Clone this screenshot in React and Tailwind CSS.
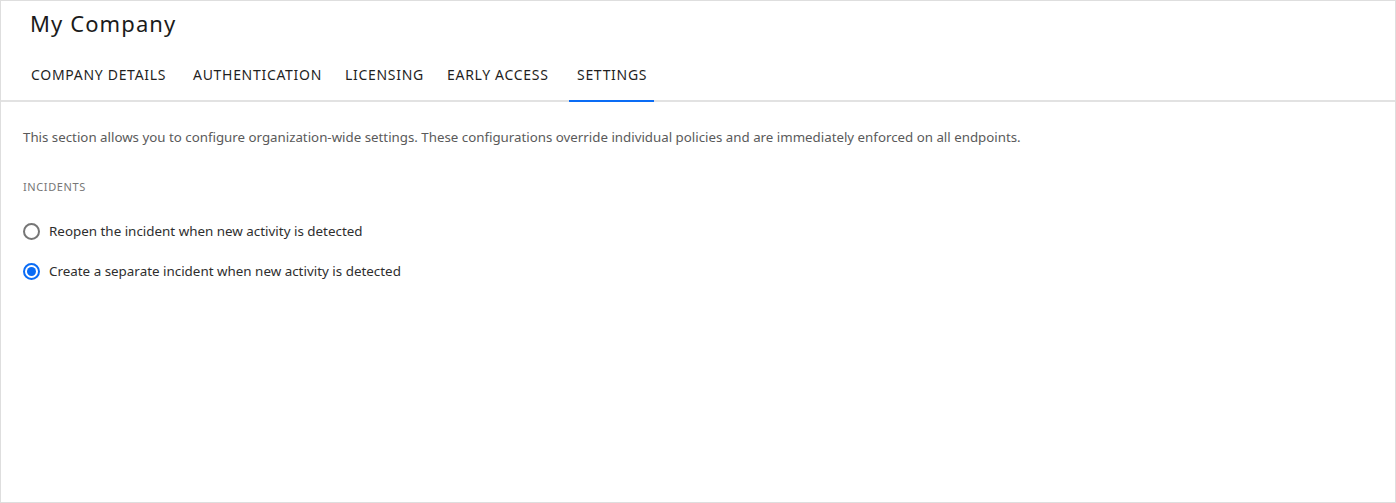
import React from "react";

const tabs = [
  ["COMPANY DETAILS", "w-[138px]"],
  ["AUTHENTICATION", "w-[128px]"],
  ["LICENSING", "w-[78px]"],
  ["EARLY ACCESS", "w-[106px]"],
  ["SETTINGS", "w-[69px]"],
];

function Radio({ checked, label }) {
  return (
    <label className="flex items-center h-[20px]">
      {checked ? (
        <span className="w-[17px] h-[17px] rounded-full border-[2px] border-[#0a6cf5] flex items-center justify-center">
          <span className="w-[9px] h-[9px] rounded-full bg-[#0a6cf5]" />
        </span>
      ) : (
        <span className="w-[17px] h-[17px] rounded-full border-[2px] border-[#767676]" />
      )}
      <span className="ml-[9px] text-[13.4px] text-[#2e2e2e]" style={{ fontFamily: '"Noto Sans", sans-serif' }}>
        {label}
      </span>
    </label>
  );
}

export default function App() {
  return (
    <div className="w-[1396px] h-[503px] bg-white border border-[#dedede] flex flex-col overflow-hidden">
      <div className="border-b-2 border-[#e2e2e2] pl-[22px] flex flex-col">
        <div
          className="pl-[7px] pt-[6px] h-[40px] text-[22px] text-[#1b1b1b] tracking-[1.1px]"
          style={{ fontFamily: '"Noto Sans", sans-serif' }}
        >
          My Company
        </div>
        <div className="flex gap-[8px] mt-[18px]">
          {tabs.map(([t, w]) => (
            <div
              key={t}
              className={
                "px-[8px] h-[43px] pt-[5px] text-[14px] text-[#1f1f1f] border-b-2 -mb-[2px] " +
                (t === "SETTINGS" ? "border-[#0a6cf5]" : "border-transparent")
              }
              style={{ fontFamily: '"Noto Sans", sans-serif' }}
            >
              <div className={w + " whitespace-nowrap tracking-[0.7px]"}>{t}</div>
            </div>
          ))}
        </div>
      </div>
      <div className="pl-[22px] pt-[26px]" style={{ fontFamily: '"Noto Sans", sans-serif' }}>
        <p className="text-[13.3px] text-[#5a5a5a] leading-[18px]">
          This section allows you to configure organization-wide settings. These configurations override individual policies and are immediately enforced on all endpoints.
        </p>
        <div className="mt-[34px] text-[11px] text-[#777] leading-[14px] tracking-[0.6px]">INCIDENTS</div>
        <div className="mt-[27px] flex flex-col gap-[20px]">
          <Radio label="Reopen the incident when new activity is detected" />
          <Radio checked label="Create a separate incident when new activity is detected" />
        </div>
      </div>
    </div>
  );
}
